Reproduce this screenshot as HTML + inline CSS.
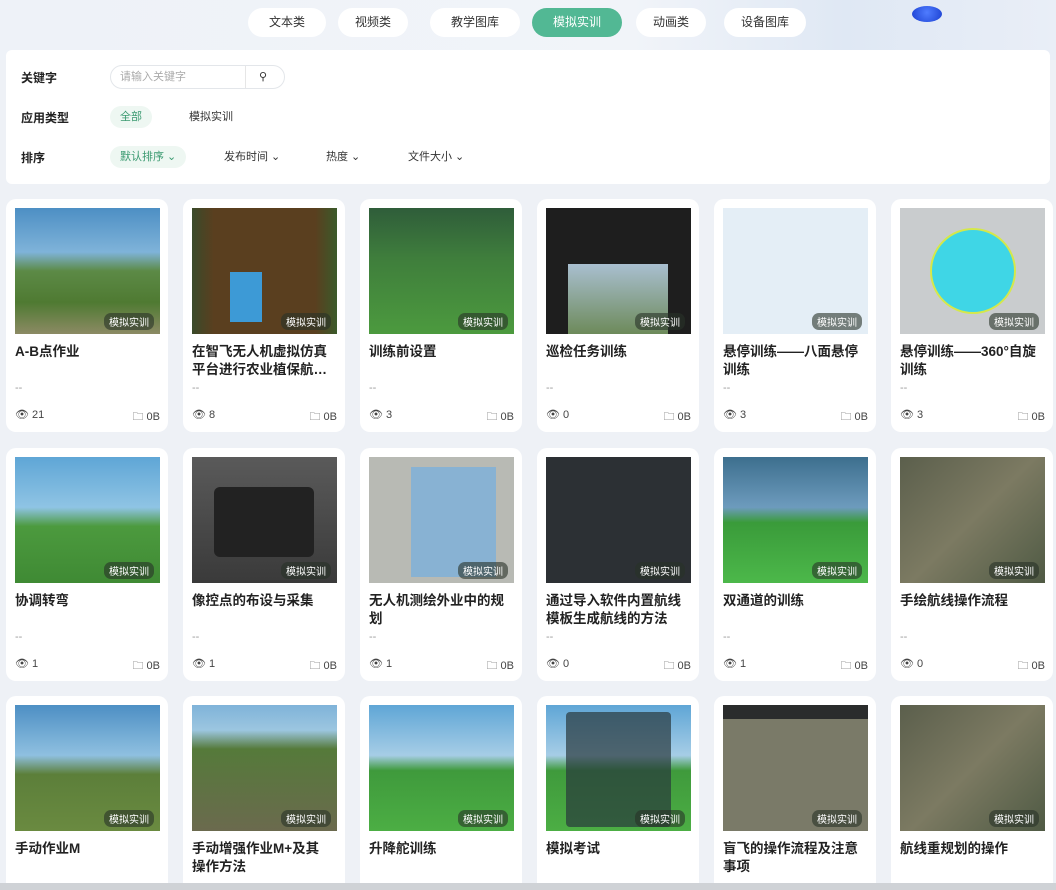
<!DOCTYPE html>
<html><head><meta charset="utf-8"><style>
*{box-sizing:border-box;margin:0;padding:0}
html,body{width:1056px;height:890px;overflow:hidden}
body{background:#eef1f6;font-family:"Liberation Sans","Noto Sans CJK SC",sans-serif;position:relative;color:#222}
.top{position:absolute;left:0;top:0;width:1056px;height:60px;background:linear-gradient(90deg,#eef2f8 0%,#f1f4f9 60%,#dfe8f4 80%,#e9eef7 100%)}
.orb{position:absolute;left:912px;top:6px;width:30px;height:16px;border-radius:50%;background:radial-gradient(circle at 50% 40%,#4f7cff,#1a3fd0);}
.tab{position:absolute;top:8px;height:29px;border-radius:15px;background:#fff;font-size:12px;line-height:29px;text-align:center;color:#333}
.tab.on{background:#52b894;color:#fff}
.panel{position:absolute;left:6px;top:50px;width:1044px;height:134px;background:#fff;border-radius:6px}
.lbl{position:absolute;left:15px;font-size:12px;font-weight:bold;color:#222}
.search{position:absolute;left:104px;top:15px;width:175px;height:24px;border:1px solid #e3e6ea;border-radius:12px;font-size:11px;color:#aaa;line-height:22px;padding-left:9px}
.search:after{content:"";position:absolute;left:134px;top:0;width:1px;height:22px;background:#e6e6e6}
.chip{position:absolute;font-size:11px;color:#333;height:22px;line-height:22px}
.chip.on{background:#eef7f2;color:#3a9a70;border-radius:11px;padding:0 10px}
.card{position:absolute;width:162px;height:233px;background:#fff;border-radius:10px;overflow:hidden}
.img{position:absolute;left:9px;top:9px;width:145px;height:126px;overflow:hidden}
.badge{position:absolute;right:6px;bottom:4px;background:rgba(40,50,40,.6);color:#fff;font-size:10px;padding:1px 5px;border-radius:7px}
.t{position:absolute;left:9px;top:144px;width:138px;font-size:13.5px;font-weight:bold;line-height:18px;color:#222}
.d{position:absolute;left:9px;top:183px;font-size:11px;color:#999}
.v{position:absolute;left:9px;top:209px;font-size:11px;color:#444}
.s{position:absolute;right:8px;top:209px;font-size:11px;color:#444}
.bar{position:absolute;left:0;top:883px;width:1056px;height:7px;background:#cfd2d6;z-index:5}
</style></head><body>
<div class="top"></div><div class="orb"></div>
<div class="tab" style="left:248px;width:78px">文本类</div>
<div class="tab" style="left:338px;width:70px">视频类</div>
<div class="tab" style="left:430px;width:90px">教学图库</div>
<div class="tab on" style="left:532px;width:90px">模拟实训</div>
<div class="tab" style="left:636px;width:70px">动画类</div>
<div class="tab" style="left:724px;width:82px">设备图库</div>
<div class="panel">
<div class="lbl" style="top:19px">关键字</div>
<div class="search">请输入关键字<span style="position:absolute;left:148px;top:0;color:#333">&#9906;</span></div>
<div class="lbl" style="top:59px">应用类型</div>
<div class="chip on" style="left:104px;top:56px">全部</div>
<div class="chip" style="left:183px;top:56px">模拟实训</div>
<div class="lbl" style="top:99px">排序</div>
<div class="chip on" style="left:104px;top:96px">默认排序 ⌄</div>
<div class="chip" style="left:218px;top:96px">发布时间 ⌄</div>
<div class="chip" style="left:320px;top:96px">热度 ⌄</div>
<div class="chip" style="left:402px;top:96px">文件大小 ⌄</div>
</div>

<div class="card" style="left:6px;top:199px"><div class="img" style="background:linear-gradient(#4d8fc4 0%,#7fb3d9 35%,#5c8a46 50%,#4f7a32 75%,#8c8a64 100%)"><span class="badge">模拟实训</span></div><div class="t">A-B点作业</div><div class="d">--</div><div class="v">👁 21</div><div class="s">🗀 0B</div></div>
<div class="card" style="left:183px;top:199px"><div class="img" style="background:linear-gradient(90deg,#3a4a2a 0%,#5a3f1f 15%,#5a3f1f 85%,#3b5a2a 100%)"><div style="position:absolute;left:38px;top:64px;width:32px;height:50px;background:#3d9ad6"></div><span class="badge">模拟实训</span></div><div class="t">在智飞无人机虚拟仿真平台进行农业植保航…</div><div class="d">--</div><div class="v">👁 8</div><div class="s">🗀 0B</div></div>
<div class="card" style="left:360px;top:199px"><div class="img" style="background:linear-gradient(#2f5d3a 0%,#3f7e3c 40%,#4c9a3e 100%)"><span class="badge">模拟实训</span></div><div class="t">训练前设置</div><div class="d">--</div><div class="v">👁 3</div><div class="s">🗀 0B</div></div>
<div class="card" style="left:537px;top:199px"><div class="img" style="background:#1e1e1e"><div style="position:absolute;left:22px;top:56px;width:100px;height:70px;background:linear-gradient(#a9bfd0,#6d8a5a)"></div><span class="badge">模拟实训</span></div><div class="t">巡检任务训练</div><div class="d">--</div><div class="v">👁 0</div><div class="s">🗀 0B</div></div>
<div class="card" style="left:714px;top:199px"><div class="img" style="background:#e4eef6"><span class="badge">模拟实训</span></div><div class="t">悬停训练——八面悬停训练</div><div class="d">--</div><div class="v">👁 3</div><div class="s">🗀 0B</div></div>
<div class="card" style="left:891px;top:199px"><div class="img" style="background:#c9ccce"><div style="position:absolute;left:30px;top:20px;width:86px;height:86px;border-radius:50%;background:#3fd6e6;border:2px solid #d5e84a"></div><span class="badge">模拟实训</span></div><div class="t">悬停训练——360°自旋训练</div><div class="d">--</div><div class="v">👁 3</div><div class="s">🗀 0B</div></div>

<div class="card" style="left:6px;top:448px"><div class="img" style="background:linear-gradient(#5fa6d6 0%,#8fc4e4 40%,#4c9a3e 55%,#3f8a34 100%)"><span class="badge">模拟实训</span></div><div class="t">协调转弯</div><div class="d">--</div><div class="v">👁 1</div><div class="s">🗀 0B</div></div>
<div class="card" style="left:183px;top:448px"><div class="img" style="background:linear-gradient(#5a5a5a,#3a3a3a)"><div style="position:absolute;left:22px;top:30px;width:100px;height:70px;background:#222;border-radius:6px"></div><span class="badge">模拟实训</span></div><div class="t">像控点的布设与采集</div><div class="d">--</div><div class="v">👁 1</div><div class="s">🗀 0B</div></div>
<div class="card" style="left:360px;top:448px"><div class="img" style="background:#b8bab4"><div style="position:absolute;left:42px;top:10px;width:85px;height:110px;background:#7fb0d8;opacity:.85"></div><span class="badge">模拟实训</span></div><div class="t">无人机测绘外业中的规划</div><div class="d">--</div><div class="v">👁 1</div><div class="s">🗀 0B</div></div>
<div class="card" style="left:537px;top:448px"><div class="img" style="background:#2c3034"><span class="badge">模拟实训</span></div><div class="t">通过导入软件内置航线模板生成航线的方法</div><div class="d">--</div><div class="v">👁 0</div><div class="s">🗀 0B</div></div>
<div class="card" style="left:714px;top:448px"><div class="img" style="background:linear-gradient(#3d6f8e 0%,#6d9bbd 40%,#3a9b3a 52%,#4cb84a 100%)"><span class="badge">模拟实训</span></div><div class="t">双通道的训练</div><div class="d">--</div><div class="v">👁 1</div><div class="s">🗀 0B</div></div>
<div class="card" style="left:891px;top:448px"><div class="img" style="background:linear-gradient(135deg,#5b5f4c,#7c7a62,#4f5a44)"><span class="badge">模拟实训</span></div><div class="t">手绘航线操作流程</div><div class="d">--</div><div class="v">👁 0</div><div class="s">🗀 0B</div></div>

<div class="card" style="left:6px;top:696px;height:187px;border-radius:10px 10px 0 0"><div class="img" style="background:linear-gradient(#4d8fc4 0%,#8fc0e0 40%,#5c7f3a 55%,#6a8a40 100%)"><span class="badge">模拟实训</span></div><div class="t">手动作业M</div></div>
<div class="card" style="left:183px;top:696px;height:187px;border-radius:10px 10px 0 0"><div class="img" style="background:linear-gradient(#7fb3d9 0%,#9cc6e0 20%,#557a3a 35%,#6b6a4e 100%)"><span class="badge">模拟实训</span></div><div class="t">手动增强作业M+及其操作方法</div></div>
<div class="card" style="left:360px;top:696px;height:187px;border-radius:10px 10px 0 0"><div class="img" style="background:linear-gradient(#5fa6d6 0%,#a6cde6 40%,#3f9a3c 52%,#4cae44 100%)"><span class="badge">模拟实训</span></div><div class="t">升降舵训练</div></div>
<div class="card" style="left:537px;top:696px;height:187px;border-radius:10px 10px 0 0"><div class="img" style="background:linear-gradient(#5fa6d6 0%,#a6cde6 40%,#3f9a3c 52%,#4cae44 100%)"><div style="position:absolute;left:20px;top:7px;width:105px;height:115px;background:rgba(40,55,60,.7);border-radius:4px"></div><span class="badge">模拟实训</span></div><div class="t">模拟考试</div></div>
<div class="card" style="left:714px;top:696px;height:187px;border-radius:10px 10px 0 0"><div class="img" style="background:#2a2c2c"><div style="position:absolute;left:0;top:14px;width:145px;height:112px;background:#7a7a68"></div><span class="badge">模拟实训</span></div><div class="t">盲飞的操作流程及注意事项</div></div>
<div class="card" style="left:891px;top:696px;height:187px;border-radius:10px 10px 0 0"><div class="img" style="background:linear-gradient(135deg,#5b5f4c,#7c7a62,#4f5a44)"><span class="badge">模拟实训</span></div><div class="t">航线重规划的操作</div></div>
<div class="bar"></div>
</body></html>
